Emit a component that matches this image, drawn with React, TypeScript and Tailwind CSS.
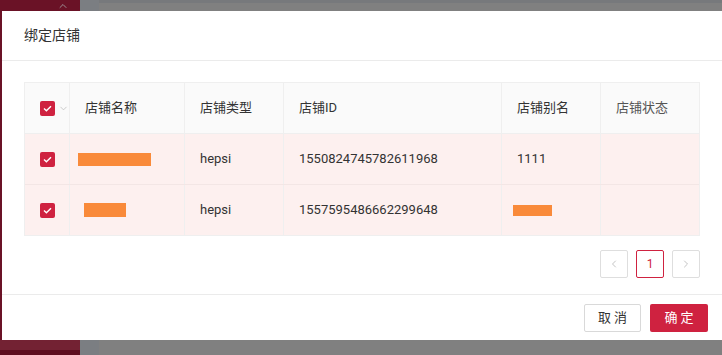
import { ChevronDown, ChevronLeft, ChevronRight, ChevronUp } from 'lucide-react';

const cols = 'grid grid-cols-[45px_115px_99px_218px_99px_99px]';
const cell = 'flex items-center px-[15px] border-r border-[#efefef] last:border-r-0';

const Check = () => (
	<span className="flex shrink-0 w-[15px] h-[15px] items-center justify-center rounded-[2px] bg-[#cf2240]">
		<svg width="9" height="7" viewBox="0 0 9 7" fill="none">
			<path d="M1 3.5 3.4 5.8 8 1.2" stroke="#fff" strokeWidth="1.4" />
		</svg>
	</span>
);

const rows = [
	{ bar: 'w-[73px] h-[13px] -ml-[7px]', id: '1550824745782611968', alias: '1111' },
	{ bar: 'w-[42px] h-[14px] -ml-px', id: '1557595486662299648', alias: '' },
];

const App = () => {
	return (
		<div className="relative w-[722px] h-[355px] overflow-hidden font-['Roboto','Noto_Sans_CJK_SC',sans-serif]">
			{/* dimmed page behind the dialog */}
			<div className="flex h-full">
				<div className="w-[80px] h-full flex flex-col bg-[#6a1226]">
					<div className="flex justify-end pr-[11px]">
						<ChevronUp size={12} className="text-[#9c8f93]" />
					</div>
					<div className="flex-1" />
					<div className="h-[10px] bg-[#732233]" />
					<div className="h-[5px] bg-[#5e0d1f]" />
				</div>
				<div className="w-[19px] h-full bg-[#7b7e82]" />
				<div className="flex-1 h-full flex flex-col bg-[#808080]">
					<div className="h-[3px] bg-[#77797c]" />
				</div>
			</div>

			{/* dialog */}
			<div className="absolute left-[2px] top-[11px] w-[720px] h-[329px] bg-white flex flex-col">
				<div className="h-[50px] flex items-center px-[22px] border-b border-[#ebebeb]">
					<span className="text-[14px] text-[#333]">绑定店铺</span>
				</div>

				<div className="px-[22px] pt-[21px]">
					<div className="border border-[#efefef] text-[13px] text-[#333]">
						<div className={`${cols} h-[51px] bg-[#fafafa] border-b border-[#efefef]`}>
							<div className="flex items-center gap-[3px] pl-[15px] border-r border-[#efefef]">
								<Check />
								<ChevronDown size={11} strokeWidth={1.5} className="shrink-0 text-[#b5b5b5]" />
							</div>
							<div className={cell}>店铺名称</div>
							<div className={cell}>店铺类型</div>
							<div className={cell}>店铺ID</div>
							<div className={cell}>店铺别名</div>
							<div className={`${cell} text-[#555]`}>店铺状态</div>
						</div>
						{rows.map((r, i) => (
							<div
								key={r.id}
								className={`${cols} bg-[#fdf0ef] ${i === 0 ? 'h-[51px] border-b border-[#f3e6e5]' : 'h-[50px]'}`}
							>
								<div className={cell}>
									<Check />
								</div>
								<div className={cell}>
									<div className={`${r.bar} bg-[#f98a3a]`} />
								</div>
								<div className={cell}>hepsi</div>
								<div className={cell}>{r.id}</div>
								<div className={cell}>
									{r.alias ? (
										r.alias
									) : (
										<div className="w-[39px] h-[11px] -ml-[4px] bg-[#f98a3a]" />
									)}
								</div>
								<div className={cell} />
							</div>
						))}
					</div>

					<div className="flex justify-end gap-[8px] mt-[14px]">
						<button className="w-[28px] h-[28px] flex items-center justify-center border border-[#dedede] rounded-[2px]">
							<ChevronLeft size={12} className="text-[#c4c4c4]" />
						</button>
						<button className="w-[28px] h-[28px] flex items-center justify-center border border-[#cf2240] rounded-[2px] text-[12px] text-[#cf2240]">
							1
						</button>
						<button className="w-[28px] h-[28px] flex items-center justify-center border border-[#dedede] rounded-[2px]">
							<ChevronRight size={12} className="text-[#c4c4c4]" />
						</button>
					</div>
				</div>

				<div className="mt-[16px] border-t border-[#ebebeb] flex justify-end gap-[9px] pt-[9px] pr-[14px]">
					<button className="w-[57px] h-[28px] border border-[#d9d9d9] rounded-[2px] text-[13px] text-[#333] tracking-[3px] pl-[3px]">
						取消
					</button>
					<button className="w-[58px] h-[28px] bg-[#cf2240] rounded-[2px] text-[13px] text-white tracking-[3px] pl-[3px]">
						确定
					</button>
				</div>
			</div>
		</div>
	);
};

export default App;
